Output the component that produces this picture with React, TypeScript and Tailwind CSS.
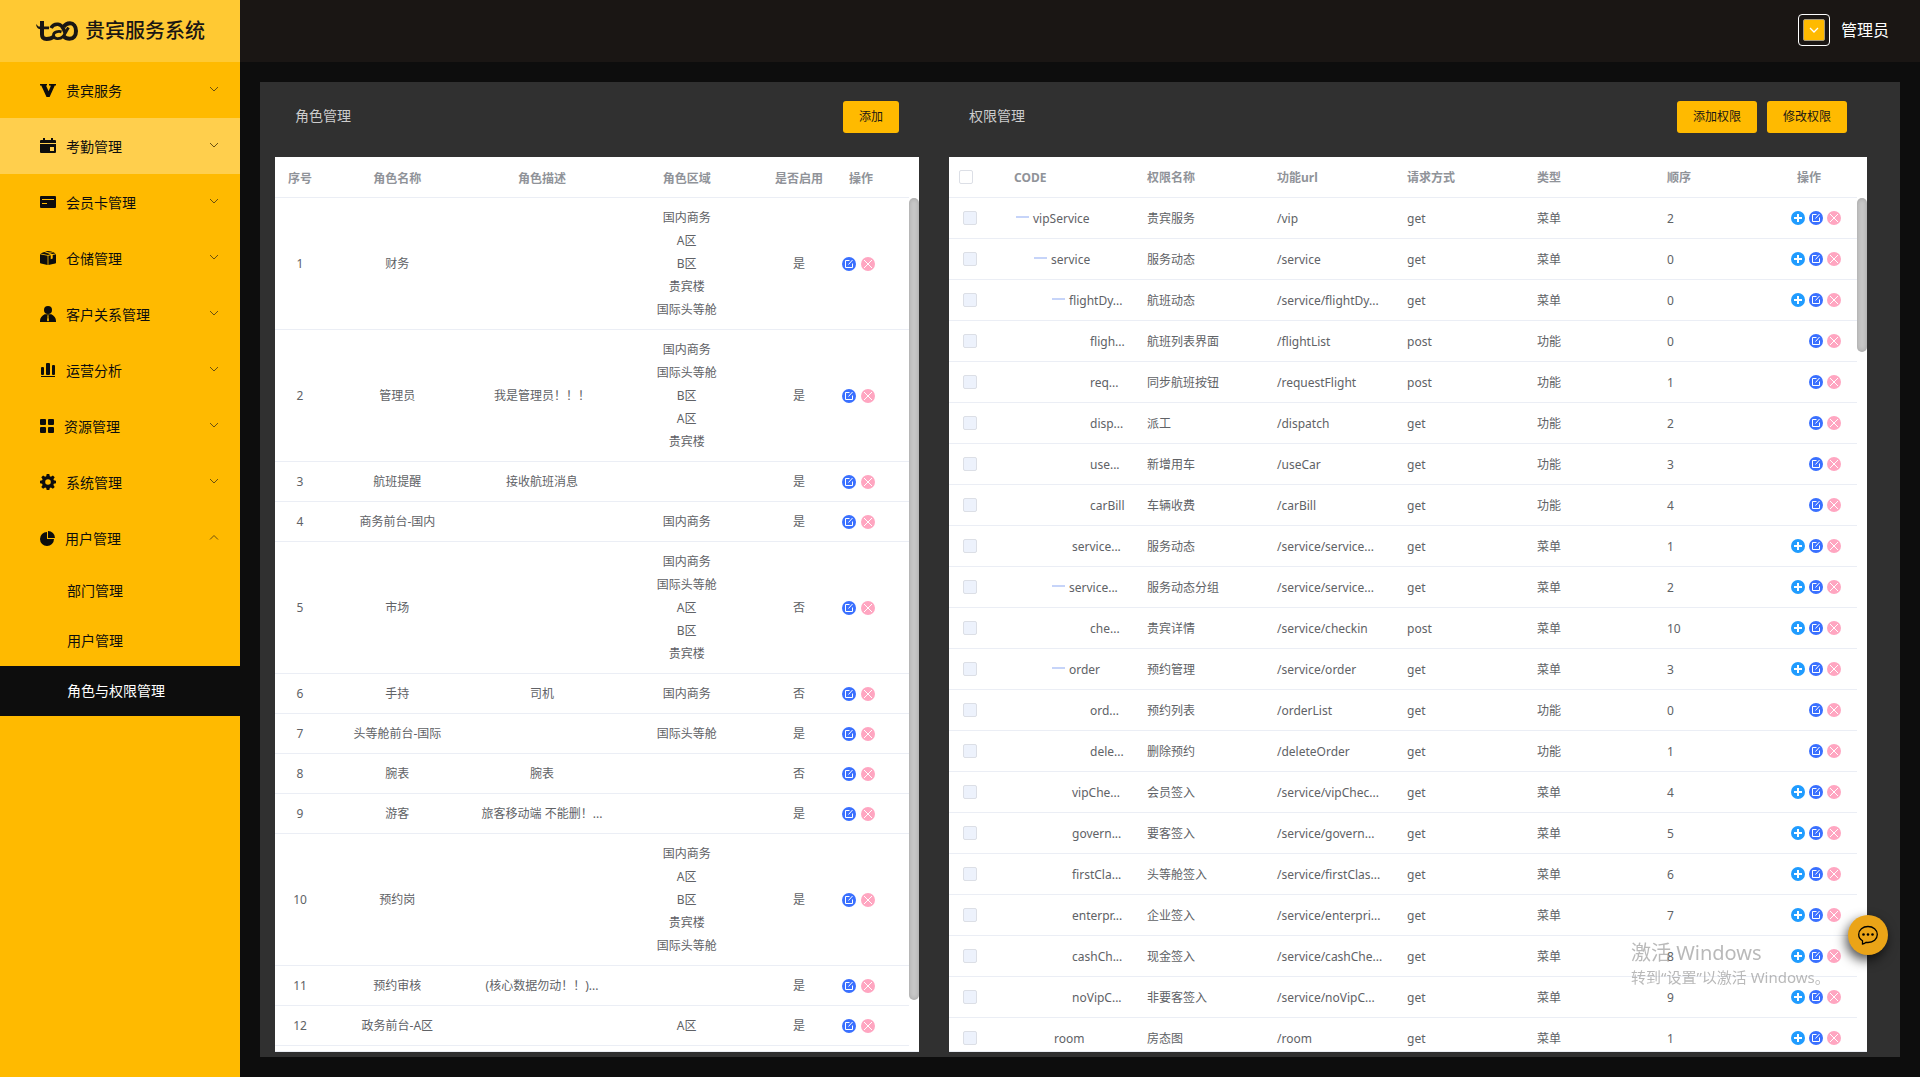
import type { ReactNode } from "react";

type NavItem = { label: string; icon: ReactNode; open?: boolean; hovered?: boolean };

type Role = {
  id: number;
  name: string;
  desc?: string;
  areas?: string[];
  enabled: boolean;
};

type Permission = {
  code: string;
  level: number;
  leaf?: boolean;
  name: string;
  url: string;
  method: string;
  kind: string;
  order: number;
};

const navItems: NavItem[] = [
  {
    label: "贵宾服务",
    icon: (
      <svg className="h-4 w-4" viewBox="0 0 16 16" fill="currentColor" aria-hidden="true">
        <path d="M0 2h7v1.600H6l2.600 5.600 2-4.600c.2-.6 0-1-.6-1H9V2h7v1.600h-1.200L9.600 15H6.500L1.300 3.600H0z" />
      </svg>
    ),
  },
  {
    label: "考勤管理",
    hovered: true,
    icon: (
      <svg className="h-4 w-4" viewBox="0 0 16 16" fill="currentColor" aria-hidden="true">
        <path d="M3 0h2v2h6V0h2v2h2a1 1 0 0 1 1 1v2H0V3a1 1 0 0 1 1-1h2z" />
        <path fillRule="evenodd" d="M0 6h16v8a1 1 0 0 1-1 1H1a1 1 0 0 1-1-1zm10 3v4h4V9z" />
      </svg>
    ),
  },
  {
    label: "会员卡管理",
    icon: (
      <svg className="h-4 w-4" viewBox="0 0 16 16" fill="currentColor" aria-hidden="true">
        <path fillRule="evenodd" d="M1 2h14a1 1 0 0 1 1 1v10a1 1 0 0 1-1 1H1a1 1 0 0 1-1-1V3a1 1 0 0 1 1-1zm1 3v1h12V5zm0 4v1h5V9z" />
      </svg>
    ),
  },
  {
    label: "仓储管理",
    icon: (
      <svg className="h-4 w-4" viewBox="0 0 16 16" fill="currentColor" aria-hidden="true">
        <path d="M0 4.300l7.600 1.500V15L1 13.600a1 1 0 0 1-1-1zM8.400 5.800l2.300-.5v4l2-.7V4.900l3.300-.7v8.400a1 1 0 0 1-.8 1L8.400 15z" />
        <path d="M.4 3.500L4.200 1.900l6.300 2.300-2.500.7zM5 1.600L8 1l3.200.5 1.300.4-3.200.6zM9.800 2.900l3.600-.7 2.200 1.200-3.400.7z" />
      </svg>
    ),
  },
  {
    label: "客户关系管理",
    icon: (
      <svg className="h-4 w-4" viewBox="0 0 16 16" fill="currentColor" aria-hidden="true">
        <circle cx="8" cy="4" r="4" />
        <path fillRule="evenodd" d="M4.600 8.300h6.800C14 9.500 16 12 16 15v1H0v-1c0-3 2-5.500 4.600-6.700zM7 9.500l.6 1.300L7 14.600l1 .9 1-.9-.6-3.800L9 9.500z" />
      </svg>
    ),
  },
  {
    label: "运营分析",
    icon: (
      <svg className="h-4 w-4" viewBox="0 0 16 16" fill="currentColor" aria-hidden="true">
        <rect x="1" y="5" width="3" height="8" rx="1" />
        <rect x="6" y="1" width="4" height="12" rx="1" />
        <rect x="12" y="3" width="3" height="10" rx="1" />
        <rect x="1" y="14" width="14" height="1" />
      </svg>
    ),
  },
  {
    label: "资源管理",
    icon: (
      <svg className="h-3.5 w-3.5" viewBox="0 0 14 14" fill="currentColor" aria-hidden="true">
        <rect width="6" height="6" rx="1" />
        <rect x="8" width="6" height="6" rx="1" />
        <rect y="8" width="6" height="6" rx="1" />
        <rect x="8" y="8" width="6" height="6" rx="1" />
      </svg>
    ),
  },
  {
    label: "系统管理",
    icon: (
      <svg className="h-4 w-4" viewBox="0 0 16 16" fill="currentColor" aria-hidden="true">
        <path
          fillRule="evenodd"
          d="M6.700 0h2.600l.5 2.200 1.100.5 2-1.300 1.800 1.800-1.300 2 .5 1.100 2.100.4v2.600l-2.200.5-.4 1.100 1.300 2-1.800 1.800-2-1.300-1.100.5L9.300 16H6.700l-.5-2.100-1.100-.5-2 1.300-1.800-1.800 1.300-2-.5-1.100L0 9.300V6.700l2.100-.4.500-1.100-1.300-2 1.800-1.800 2 1.300 1.100-.5zM8 5.200a2.800 2.800 0 1 0 0 5.600 2.800 2.800 0 0 0 0-5.600z"
        />
      </svg>
    ),
  },
  {
    label: "用户管理",
    open: true,
    icon: (
      <svg className="h-[15px] w-[15px]" viewBox="0 0 15 15" fill="currentColor" aria-hidden="true">
        <path d="M7 1v7h7A7 7 0 1 1 7 1z" />
        <path d="M8 0a7 7 0 0 1 7 7H8z" />
      </svg>
    ),
  },
];

const subItems = [
  { label: "部门管理", active: false },
  { label: "用户管理", active: false },
  { label: "角色与权限管理", active: true },
];

const roles: Role[] = [
  { id: 1, name: "财务", areas: ["国内商务", "A区", "B区", "贵宾楼", "国际头等舱"], enabled: true },
  { id: 2, name: "管理员", desc: "我是管理员！！！", areas: ["国内商务", "国际头等舱", "B区", "A区", "贵宾楼"], enabled: true },
  { id: 3, name: "航班提醒", desc: "接收航班消息", enabled: true },
  { id: 4, name: "商务前台-国内", areas: ["国内商务"], enabled: true },
  { id: 5, name: "市场", areas: ["国内商务", "国际头等舱", "A区", "B区", "贵宾楼"], enabled: false },
  { id: 6, name: "手持", desc: "司机", areas: ["国内商务"], enabled: false },
  { id: 7, name: "头等舱前台-国际", areas: ["国际头等舱"], enabled: true },
  { id: 8, name: "腕表", desc: "腕表", enabled: false },
  { id: 9, name: "游客", desc: "旅客移动端 不能删！...", enabled: true },
  { id: 10, name: "预约岗", areas: ["国内商务", "A区", "B区", "贵宾楼", "国际头等舱"], enabled: true },
  { id: 11, name: "预约审核", desc: "(核心数据勿动！！)...", enabled: true },
  { id: 12, name: "政务前台-A区", areas: ["A区"], enabled: true },
];

const permissions: Permission[] = [
  { code: "vipService", level: 0, name: "贵宾服务", url: "/vip", method: "get", kind: "菜单", order: 2 },
  { code: "service", level: 1, name: "服务动态", url: "/service", method: "get", kind: "菜单", order: 0 },
  { code: "flightDy...", level: 2, name: "航班动态", url: "/service/flightDy...", method: "get", kind: "菜单", order: 0 },
  { code: "fligh...", level: 3, leaf: true, name: "航班列表界面", url: "/flightList", method: "post", kind: "功能", order: 0 },
  { code: "req...", level: 3, leaf: true, name: "同步航班按钮", url: "/requestFlight", method: "post", kind: "功能", order: 1 },
  { code: "disp...", level: 3, leaf: true, name: "派工", url: "/dispatch", method: "get", kind: "功能", order: 2 },
  { code: "use...", level: 3, leaf: true, name: "新增用车", url: "/useCar", method: "get", kind: "功能", order: 3 },
  { code: "carBill", level: 3, leaf: true, name: "车辆收费", url: "/carBill", method: "get", kind: "功能", order: 4 },
  { code: "service...", level: 2, leaf: true, name: "服务动态", url: "/service/service...", method: "get", kind: "菜单", order: 1 },
  { code: "service...", level: 2, name: "服务动态分组", url: "/service/service...", method: "get", kind: "菜单", order: 2 },
  { code: "che...", level: 3, leaf: true, name: "贵宾详情", url: "/service/checkin", method: "post", kind: "菜单", order: 10 },
  { code: "order", level: 2, name: "预约管理", url: "/service/order", method: "get", kind: "菜单", order: 3 },
  { code: "ord...", level: 3, leaf: true, name: "预约列表", url: "/orderList", method: "get", kind: "功能", order: 0 },
  { code: "dele...", level: 3, leaf: true, name: "删除预约", url: "/deleteOrder", method: "get", kind: "功能", order: 1 },
  { code: "vipChe...", level: 2, leaf: true, name: "会员签入", url: "/service/vipChec...", method: "get", kind: "菜单", order: 4 },
  { code: "govern...", level: 2, leaf: true, name: "要客签入", url: "/service/govern...", method: "get", kind: "菜单", order: 5 },
  { code: "firstCla...", level: 2, leaf: true, name: "头等舱签入", url: "/service/firstClas...", method: "get", kind: "菜单", order: 6 },
  { code: "enterpr...", level: 2, leaf: true, name: "企业签入", url: "/service/enterpri...", method: "get", kind: "菜单", order: 7 },
  { code: "cashCh...", level: 2, leaf: true, name: "现金签入", url: "/service/cashChe...", method: "get", kind: "菜单", order: 8 },
  { code: "noVipC...", level: 2, leaf: true, name: "非要客签入", url: "/service/noVipC...", method: "get", kind: "菜单", order: 9 },
  { code: "room", level: 1, leaf: true, name: "房态图", url: "/room", method: "get", kind: "菜单", order: 1 },
];

const permissionColumns = ["权限名称", "功能url", "请求方式", "类型", "顺序", "操作"];

function Logo() {
  return (
    <svg className="h-5 w-[42px]" viewBox="0 0 42 20" fill="none" stroke="currentColor" aria-hidden="true">
      <path d="M0 3l2.500 2.600H13v2.600H5C2 8.200.3 6.500 0 3z" fill="currentColor" stroke="none" />
      <path d="M6 0v13.500c0 3 1.500 4.500 4.500 4.500 3.500 0 5.500-.8 7.500-2.500" strokeWidth="4" />
      <path d="M15 7c1.500-2.800 4-4 7-3.700 2.800.3 4.300 2 5.500 4.700l2 4.500" strokeWidth="3.600" />
      <path d="M25.500 10.800c-3-1-8 0-8 3.200 0 4.500 6.500 4.500 9.500 1.500 2-2 3-5 5.500-9" strokeWidth="2.800" />
      <path d="M27.500 6c1.500-2.500 4-3.700 6.500-3.700 3.500 0 6 3 6 7.700 0 4.800-2.500 7.800-6.500 7.800-2.500 0-4.500-1-6-2.600" strokeWidth="4" />
    </svg>
  );
}

function Chevron({ up = false }: { up?: boolean }) {
  return (
    <svg className="h-3 w-3 text-[#6b5110]" viewBox="0 0 12 12" fill="none" stroke="currentColor" aria-hidden="true">
      <path d={up ? "M2 7.500l4-4 4 4" : "M2 3l4 4 4-4"} />
    </svg>
  );
}

function AddIcon() {
  return (
    <button type="button" aria-label="添加" className="h-3.5 w-3.5">
      <svg className="h-3.5 w-3.5" viewBox="0 0 14 14" aria-hidden="true">
        <circle cx="7" cy="7" r="7" fill="#209cff" />
        <path d="M7 3v8M3 7h8" stroke="#fff" strokeWidth="2" />
      </svg>
    </button>
  );
}

function EditIcon() {
  return (
    <button type="button" aria-label="编辑" className="h-3.5 w-3.5">
      <svg className="h-3.5 w-3.5" viewBox="0 0 14 14" fill="none" aria-hidden="true">
        <circle cx="7" cy="7" r="7" fill="#3a70ff" />
        <path d="M7.500 3.500h-4v7h7v-4M6.500 7.500l4-4.500" stroke="#fff" />
      </svg>
    </button>
  );
}

function DeleteIcon() {
  return (
    <button type="button" aria-label="删除" className="h-3.5 w-3.5">
      <svg className="h-3.5 w-3.5" viewBox="0 0 14 14" fill="none" aria-hidden="true">
        <circle cx="7" cy="7" r="7" fill="#ffa6c1" />
        <path d="M3 3l8 8M11 3l-8 8" stroke="#fff" />
      </svg>
    </button>
  );
}

function ActionButton({ children }: { children: ReactNode }) {
  return (
    <button type="button" className="h-8 rounded-[3px] bg-[#ffba00] px-4 text-xs text-[#1a1614]">
      {children}
    </button>
  );
}

function ScrollTrack({ thumb }: { thumb: string }) {
  return (
    <div className="w-2.5 shrink-0 pt-[41px]">
      <div className={`rounded-full bg-[#c8c8c8] shadow-[inset_0_0_5px_rgba(0,0,0,0.2)] ${thumb}`} />
    </div>
  );
}

function Sidebar() {
  return (
    <aside className="w-60 shrink-0 bg-[#ffba00] text-[#0d0d0d]">
      <div className="flex h-[62px] items-center gap-[7px] bg-[#ffc933] pl-9 text-[#1a1614]">
        <Logo />
        <h1 className="text-xl font-medium leading-6">贵宾服务系统</h1>
      </div>
      <nav>
        {navItems.map((item) => (
          <button
            key={item.label}
            type="button"
            aria-expanded={Boolean(item.open)}
            className={`flex h-14 w-full items-center gap-2.5 pl-10 pr-5 text-left text-sm ${item.hovered ? "bg-[#ffcf4d]" : ""}`}
          >
            {item.icon}
            <span className="flex-1 pt-0.5">{item.label}</span>
            <Chevron up={item.open} />
          </button>
        ))}
        {subItems.map((item) => (
          <a
            key={item.label}
            href="#"
            className={`flex h-[50px] items-center pl-[67px] text-sm ${item.active ? "bg-[#0d0d0d] text-white" : ""}`}
          >
            {item.label}
          </a>
        ))}
      </nav>
    </aside>
  );
}

function RoleTable() {
  const th = "h-[41px] border-b border-[#ebeef5] pt-0.5 font-bold";
  const td = "border-b border-[#ebeef5] py-2";
  return (
    <section className="flex min-h-0 min-w-0 flex-col">
      <div className="flex h-[75px] shrink-0 items-center justify-between px-5 pb-[7px]">
        <h2 className="text-sm text-[#cccccc]">角色管理</h2>
        <div className="pt-0.5">
          <ActionButton>添加</ActionButton>
        </div>
      </div>
      <div className="flex min-h-0 flex-1 overflow-hidden border-b border-[#ebeef5] bg-white">
        <div className="min-w-0 flex-1">
          <table className="w-full table-fixed border-separate border-spacing-0 text-center text-xs leading-[23px] text-[#606266]">
            <colgroup>
              <col className="w-[50px]" />
              <col />
              <col />
              <col />
              <col className="w-20" />
              <col className="w-[70px]" />
            </colgroup>
            <thead className="text-[#909399]">
              <tr>
                <th className={th}>序号</th>
                <th className={th}>角色名称</th>
                <th className={th}>角色描述</th>
                <th className={th}>角色区域</th>
                <th className={th}>是否启用</th>
                <th className={`${th} pl-2.5 text-left`}>操作</th>
              </tr>
            </thead>
            <tbody>
              {roles.map((role) => (
                <tr key={role.id}>
                  <td className={td}>{role.id}</td>
                  <td className={td}>{role.name}</td>
                  <td className={td}>{role.desc}</td>
                  <td className={td}>
                    {role.areas?.map((area) => (
                      <div key={area}>{area}</div>
                    ))}
                  </td>
                  <td className={td}>{role.enabled ? "是" : "否"}</td>
                  <td className={td}>
                    <div className="flex items-center gap-[5px] pl-[3px]">
                      <EditIcon />
                      <DeleteIcon />
                    </div>
                  </td>
                </tr>
              ))}
            </tbody>
          </table>
        </div>
        <ScrollTrack thumb="h-[94%]" />
      </div>
    </section>
  );
}

const indents = ["pl-3", "pl-[30px]", "pl-12", "pl-[66px]"];

function PermissionTable() {
  const th = "h-[41px] border-b border-[#ebeef5] pl-2.5 font-bold";
  const td = "border-b border-[#ebeef5] pb-[7px] pt-[9px]";
  return (
    <section className="flex min-h-0 min-w-0 flex-col">
      <div className="flex h-[75px] shrink-0 items-center justify-between px-5 pb-[7px]">
        <h2 className="text-sm text-[#cccccc]">权限管理</h2>
        <div className="flex gap-2.5 pt-0.5">
          <ActionButton>添加权限</ActionButton>
          <ActionButton>修改权限</ActionButton>
        </div>
      </div>
      <div className="flex min-h-0 flex-1 overflow-hidden border-b border-[#ebeef5] bg-white">
        <div className="min-w-0 flex-1">
          <table className="w-full table-fixed border-separate border-spacing-0 whitespace-nowrap text-left text-xs leading-6 text-[#606266]">
            <colgroup>
              <col className="w-[55px]" />
              <col className="w-[133px]" />
              <col />
              <col />
              <col />
              <col />
              <col />
              <col className="w-[70px]" />
            </colgroup>
            <thead className="text-[#909399]">
              <tr>
                <th className={th}>
                  <input
                    type="checkbox"
                    aria-label="全选"
                    className="block h-3.5 w-3.5 appearance-none rounded-xs border border-[#dcdfe6] bg-white"
                  />
                </th>
                <th className={`${th} pt-0.5`}>CODE</th>
                {permissionColumns.map((column) => (
                  <th key={column} className={`${th} pt-0.5`}>
                    {column}
                  </th>
                ))}
              </tr>
            </thead>
            <tbody>
              {permissions.map((row) => (
                <tr key={row.url + row.name}>
                  <td className="border-b border-[#ebeef5] py-2 pl-3.5">
                    <input
                      type="checkbox"
                      disabled
                      aria-label={row.name}
                      className="block h-3.5 w-3.5 appearance-none rounded-xs border border-[#dcdfe6] bg-[#edf2fc]"
                    />
                  </td>
                  <td className={td}>
                    <div className={`flex items-center ${indents[row.level]}`}>
                      {row.leaf ? (
                        <span className="w-5" />
                      ) : (
                        <span className="mb-1 mr-1 h-0.5 w-[13px] bg-[#c6d4f9]" />
                      )}
                      {row.code}
                    </div>
                  </td>
                  <td className={`${td} pl-2.5`}>{row.name}</td>
                  <td className={`${td} pl-2.5`}>{row.url}</td>
                  <td className={`${td} pl-2.5`}>{row.method}</td>
                  <td className={`${td} pl-2.5`}>{row.kind}</td>
                  <td className={`${td} pl-2.5`}>{row.order}</td>
                  <td className="border-b border-[#ebeef5] py-2 pr-4">
                    <div className="flex items-center justify-end gap-1">
                      {row.kind === "菜单" && <AddIcon />}
                      <EditIcon />
                      <DeleteIcon />
                    </div>
                  </td>
                </tr>
              ))}
            </tbody>
          </table>
        </div>
        <ScrollTrack thumb="h-[18%]" />
      </div>
    </section>
  );
}

export default function App() {
  return (
    <div className="flex h-screen overflow-hidden bg-[#0d0d0d] font-['Noto_Sans','Noto_Sans_CJK_SC',sans-serif]">
      <Sidebar />
      <div className="flex min-w-0 flex-1 flex-col">
        <header className="flex h-[62px] shrink-0 items-center justify-end gap-[11px] bg-[#1a1614] pb-0.5 pr-[31px]">
          <button
            type="button"
            aria-label="用户菜单"
            className="flex h-8 w-8 items-center justify-center rounded-sm border border-white"
          >
            <span className="flex h-[22px] w-[22px] items-center justify-center rounded-xs border border-[#a89a78] bg-[#ffba00]">
              <svg className="h-3 w-3" viewBox="0 0 12 12" fill="none" stroke="#fff" strokeWidth="1.300" aria-hidden="true">
                <path d="M2 4l4 4 4-4" />
              </svg>
            </span>
          </button>
          <span className="text-base text-white">管理员</span>
        </header>
        <main className="flex min-h-0 flex-1 flex-col p-5">
          <div className="grid min-h-0 flex-1 grid-cols-[644fr_918fr] grid-rows-[minmax(0,1fr)] gap-[30px] bg-[#303030] pb-[5px] pl-[15px] pr-[33px]">
            <RoleTable />
            <PermissionTable />
          </div>
        </main>
      </div>

      <div className="pointer-events-none fixed bottom-[90px] right-0 w-[289px] whitespace-nowrap text-[#808080]/55">
        <p className="text-xl leading-7">激活 Windows</p>
        <p className="text-[15px] leading-5">转到“设置”以激活 Windows。</p>
      </div>

      <button
        type="button"
        aria-label="在线客服"
        className="fixed bottom-[122px] right-8 flex h-10 w-10 items-center justify-center rounded-full bg-[#eba417] text-black shadow-[-2px_5px_12px_rgba(0,0,0,0.7)]"
      >
        <svg className="h-5 w-5" viewBox="0 0 20 20" fill="none" stroke="currentColor" aria-hidden="true">
          <path d="M4.500 19v-3.200C2 14.300.7 12 .7 9.500.7 5 4.800 1.500 10 1.500s9.300 3.500 9.300 8-4 8-9.300 8c-.7 0-1.200 0-1.800-.2C7 18.500 6 18.900 4.500 19z" strokeWidth="1.300" />
          <g fill="currentColor" stroke="none">
            <circle cx="5.500" cy="9.500" r="1.300" />
            <circle cx="10" cy="9.500" r="1.300" />
            <circle cx="14.500" cy="9.500" r="1.300" />
          </g>
        </svg>
      </button>
    </div>
  );
}
